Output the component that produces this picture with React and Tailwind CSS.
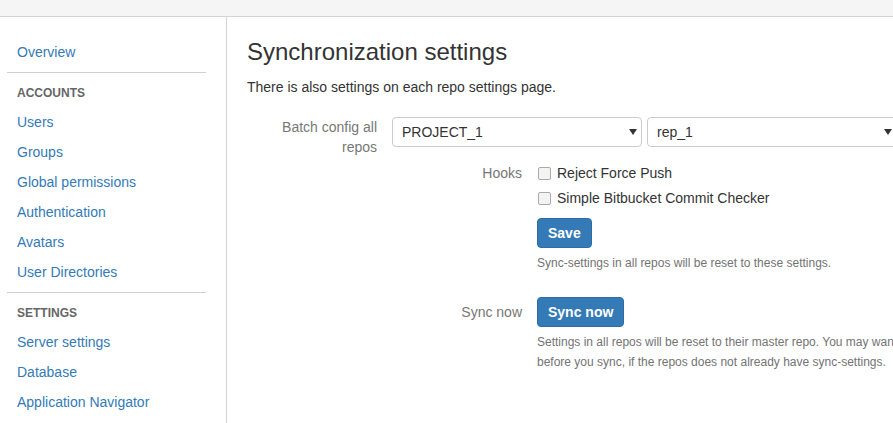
export default function App() {
  const accounts = ["Users", "Groups", "Global permissions", "Authentication", "Avatars", "User Directories"];
  const settings = ["Server settings", "Database", "Application Navigator"];

  const Caret = () => (
    <svg width="8" height="6" viewBox="0 0 8 6" className="shrink-0">
      <path d="M0 0 L8 0 L4 6 Z" fill="#333" />
    </svg>
  );

  return (
    <div className="w-[893px] h-[423px] overflow-hidden bg-white text-[14px] leading-[20px] text-[#333]" style={{ fontFamily: '"Liberation Sans", Arial, sans-serif' }}>
      <div className="h-[17px] bg-[#f5f5f5] border-b border-[#d4d4d4]" />
      <div className="flex h-[406px]">
        {/* sidebar */}
        <div className="w-[227px] shrink-0 border-r border-[#d4d4d4] pl-[7px] pr-[20px] pt-[25px]">
          <a className="block pl-[10px] h-[20px] text-[#337ab7]">Overview</a>
          <div className="border-t border-[#d0d0d0] mt-[10px]" />
          <div className="pl-[10px] mt-[10px] h-[19px] text-[12px] font-bold text-[#666]">ACCOUNTS</div>
          {accounts.map((a) => (
            <a key={a} className="block pl-[10px] mt-[10px] h-[20px] text-[#337ab7]">{a}</a>
          ))}
          <div className="border-t border-[#d0d0d0] mt-[10px]" />
          <div className="pl-[10px] mt-[10px] h-[19px] text-[12px] font-bold text-[#666]">SETTINGS</div>
          {settings.map((a) => (
            <a key={a} className="block pl-[10px] mt-[10px] h-[20px] text-[#337ab7]">{a}</a>
          ))}
        </div>

        {/* main */}
        <div className="flex-1 pl-[20px] pt-[20px] min-w-0 overflow-hidden">
          <h2 className="text-[24px] leading-[30px] font-normal text-[#333]">Synchronization settings</h2>
          <p className="mt-[10px]">There is also settings on each repo settings page.</p>

          <div className="flex mt-[20px]">
            <div className="w-[130px] shrink-0 text-right text-[#777]">Batch config all<br />repos</div>
            <div className="flex ml-[15px] gap-[5px] flex-1">
              <div className="w-[250px] shrink-0 h-[30px] border border-[#ccc] rounded-[4px] flex items-center justify-between pl-[9px] pr-[4px] text-[#333]">
                <span>PROJECT_1</span>
                <Caret />
              </div>
              <div className="w-[250px] shrink-0 h-[30px] border border-[#ccc] rounded-[4px] flex items-center justify-between pl-[9px] pr-[4px] text-[#333]">
                <span>rep_1</span>
                <Caret />
              </div>
            </div>
          </div>

          <div className="flex">
            <div className="w-[275px] shrink-0 text-right text-[#777] pt-[6px]">Hooks</div>
            <div className="ml-[15px]">
              <label className="flex items-center h-[20px] mt-[6px]">
                <span className="w-[13px] h-[13px] border border-[#aaa] rounded-[2px] bg-[#f3f3f3] ml-[1px]" />
                <span className="ml-[6px]">Reject Force Push</span>
              </label>
              <label className="flex items-center h-[20px] mt-[5px]">
                <span className="w-[13px] h-[13px] border border-[#aaa] rounded-[2px] bg-[#f3f3f3] ml-[1px]" />
                <span className="ml-[6px]">Simple Bitbucket Commit Checker</span>
              </label>
              <button className="mt-[10px] h-[30px] px-[10px] bg-[#337ab7] border border-[#2e6da4] rounded-[4px] text-white font-bold">Save</button>
              <p className="mt-[5px] text-[12px] leading-[20px] text-[#737373]">Sync-settings in all repos will be reset to these settings.</p>
            </div>
          </div>

          <div className="flex mt-[24px]">
            <div className="w-[275px] shrink-0 text-right text-[#777] pt-[5px]">Sync now</div>
            <div className="ml-[15px] min-w-0">
              <button className="h-[30px] px-[10px] bg-[#337ab7] border border-[#2e6da4] rounded-[4px] text-white font-bold">Sync now</button>
              <p className="mt-[5px] text-[12px] leading-[20px] text-[#737373] whitespace-nowrap">Settings in all repos will be reset to their master repo. You may want to save sync-settings first<br />before you sync, if the repos does not already have sync-settings.</p>
            </div>
          </div>
        </div>
      </div>
    </div>
  );
}
